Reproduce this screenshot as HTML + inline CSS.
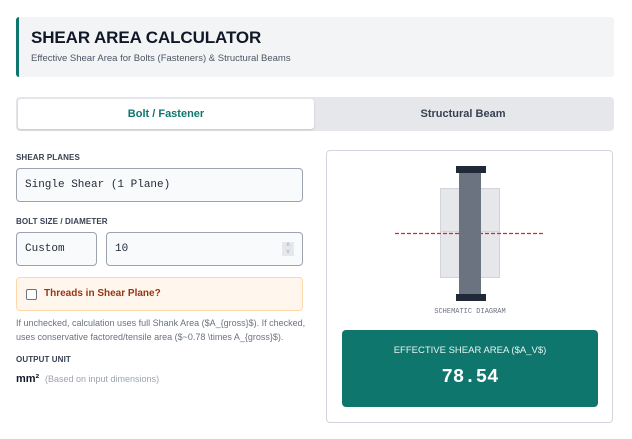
<!DOCTYPE html><html><head><style>
*{margin:0;padding:0;box-sizing:border-box}
body{width:632px;height:439px;background:#fff;font-family:"Liberation Sans",sans-serif;position:relative;overflow:hidden;color:#111827}
.a{position:absolute}
.lbl{font-size:8px;font-weight:bold;color:#374151;letter-spacing:.1px}
.inp{background:#f9fafb;border:1px solid #9ca3af;border-radius:4px;font-family:"Liberation Mono",monospace;font-size:11px;color:#1f2937;padding-left:8px;display:flex;align-items:center}
</style></head><body>
<div class="a" style="left:16px;top:17px;width:598px;height:60px;background:#f3f4f6;border-left:3px solid #0f766e;border-radius:3px"></div>
<div class="a" style="left:31px;top:28px;font-size:17px;font-weight:bold;color:#111827;letter-spacing:-.1px">SHEAR AREA CALCULATOR</div>
<div class="a" style="left:31px;top:53px;font-size:9.5px;color:#4b5563">Effective Shear Area for Bolts (Fasteners) &amp; Structural Beams</div>
<div class="a" style="left:16px;top:97px;width:598px;height:34px;background:#e5e7eb;border-radius:4px"></div>
<div class="a" style="left:18px;top:99px;width:296px;height:30px;background:#fff;border-radius:3px;box-shadow:0 1px 2px rgba(0,0,0,.15);text-align:center;line-height:30px;font-size:11px;font-weight:bold;color:#0f766e">Bolt / Fastener</div>
<div class="a" style="left:314px;top:99px;width:298px;height:30px;text-align:center;line-height:30px;font-size:11px;font-weight:bold;color:#374151">Structural Beam</div>
<div class="a lbl" style="left:16px;top:153px">SHEAR PLANES</div>
<div class="a inp" style="left:16px;top:168px;width:287px;height:34px">Single Shear (1 Plane)</div>
<div class="a lbl" style="left:16px;top:217px">BOLT SIZE / DIAMETER</div>
<div class="a inp" style="left:16px;top:232px;width:81px;height:34px">Custom</div>
<div class="a inp" style="left:106px;top:232px;width:197px;height:34px">10</div>
<div class="a" style="left:282px;top:242px;width:12px;height:14px;background:#e5e7eb;color:#9ca3af;font-size:7px;line-height:7px;text-align:center">˄<br>˅</div>
<div class="a" style="left:16px;top:277px;width:287px;height:34px;background:#fff7ed;border:1px solid #fed7aa;border-radius:4px"></div>
<div class="a" style="left:26px;top:289px;width:11px;height:11px;border:1px solid #6b7280;border-radius:2px;background:#fff"></div>
<div class="a" style="left:44px;top:288px;font-size:10px;font-weight:bold;color:#9a3412">Threads in Shear Plane?</div>
<div class="a" style="left:16px;top:317px;font-size:9px;line-height:13.5px;color:#6b7280;width:295px">If unchecked, calculation uses full Shank Area ($A_{gross}$). If checked, uses conservative factored/tensile area ($~0.78 \times A_{gross}$).</div>
<div class="a lbl" style="left:16px;top:355px">OUTPUT UNIT</div>
<div class="a" style="left:16px;top:373px;font-size:11px;font-weight:bold">mm²</div>
<div class="a" style="left:45px;top:374px;font-size:9px;color:#9ca3af">(Based on input dimensions)</div>
<div class="a" style="left:326px;top:150px;width:287px;height:273px;border:1px solid #d1d5db;border-radius:4px"></div>
<div class="a" style="left:440px;top:188px;width:60px;height:90px;background:#e5e7eb;border:1px solid #d1d5db"></div>
<div class="a" style="left:440px;top:231px;width:60px;height:1px;background:#d1d5db"></div>
<svg class="a" style="left:395px;top:232px" width="150" height="3"><line x1="0" y1="1.5" x2="150" y2="1.5" stroke="#dc2626" stroke-width="1.2" stroke-dasharray="4 2"/></svg>
<div class="a" style="left:459px;top:172px;width:22px;height:123px;background:#6b7280"></div>
<div class="a" style="left:456px;top:166px;width:30px;height:7px;background:#1f2937"></div>
<div class="a" style="left:456px;top:294px;width:30px;height:7px;background:#1f2937"></div>
<div class="a" style="left:370px;top:308px;width:200px;text-align:center;font-family:'Liberation Mono',monospace;font-size:7px;color:#6b7280">SCHEMATIC DIAGRAM</div>
<div class="a" style="left:342px;top:330px;width:256px;height:77px;background:#0f766e;border-radius:4px;color:#fff;text-align:center">
<div style="margin-top:15px;font-size:9.5px;color:#e6f4f1">EFFECTIVE SHEAR AREA ($A_V$)</div>
<div style="margin-top:10px;font-family:'Liberation Mono',monospace;font-weight:bold;font-size:19px">78.54</div></div>
</body></html>
